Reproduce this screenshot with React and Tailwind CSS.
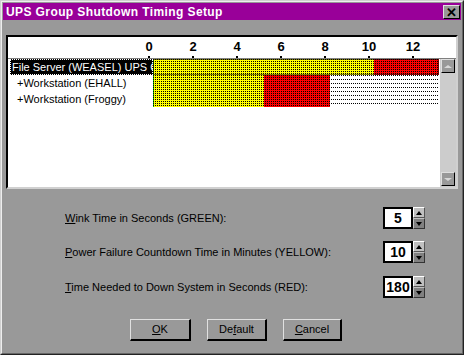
import React from 'react'

const font = { fontFamily: '"Liberation Sans", Arial, sans-serif' }

const ticks = [0, 2, 4, 6, 8, 10, 12]

const rows = [
  {
    name: "File Server (WEASEL) UPS Group",
    selected: true,
    segs: [["g", 0, 1], ["y", 1, 221], ["r", 221, 286]],
  },
  {
    name: "+Workstation (EHALL)",
    segs: [["g", 0, 1], ["y", 1, 111], ["r", 111, 177], ["w", 177, 286]],
  },
  {
    name: "+Workstation (Froggy)",
    segs: [["g", 0, 1], ["y", 1, 111], ["r", 111, 177], ["w", 177, 286]],
  },
]

const fills = { g: "#00c000", y: "#ffff00", r: "#ff0000", w: "#ffffff" }

// dithered bar, drawn like the old timing chart
const Bar = ({ id, segs, selected }) => (
  <svg width="286" height="16" className="block">
    <defs>
      {Object.keys(fills).map((k) => (
        <pattern key={k} id={id + k} width="2" height={k === "w" ? 4 : 2} patternUnits="userSpaceOnUse">
          <rect width="2" height="4" fill={fills[k]} />
          <rect width="1" height="1" fill="#000" />
        </pattern>
      ))}
    </defs>
    {segs.map(([k, a, b]) => (
      <rect key={k} x={a} y="0" width={b - a} height="16" fill={`url(#${id + k})`} />
    ))}
    {selected && (
      <rect x="0.5" y="0.5" width="285" height="15" fill="none" stroke="#000" strokeDasharray="1 1" />
    )}
  </svg>
)

const Spin = ({ value }) => (
  <div className="flex">
    <div className="w-[30px] h-[22px] bg-white border-2 border-black flex items-center justify-center text-[14px] font-bold text-black">
      {value}
    </div>
    <div className="flex flex-col w-[12px]">
      <div className="h-[11px] bg-[#c0c0c0] border-t border-l border-t-white border-l-white border-b border-r border-b-[#555] border-r-[#555] flex items-center justify-center">
        <div className="w-0 h-0 border-l-[3px] border-r-[3px] border-b-[4px] border-l-transparent border-r-transparent border-b-black" />
      </div>
      <div className="h-[11px] bg-[#808080] border-t border-l border-t-[#c0c0c0] border-l-[#c0c0c0] border-b border-r border-b-[#333] border-r-[#333] flex items-center justify-center">
        <div className="w-0 h-0 border-l-[3px] border-r-[3px] border-t-[4px] border-l-transparent border-r-transparent border-t-black" />
      </div>
    </div>
  </div>
)

const Btn = ({ w, children }) => (
  <button className={`${w} h-[22px] bg-[#999999] border-t border-l border-t-[#e0e0e0] border-l-[#e0e0e0] border-b-2 border-r-2 border-b-black border-r-black text-[11px] text-black flex items-center justify-center`}>
    {children}
  </button>
)

const ScrollBtn = ({ up }) => (
  <div className="w-[14px] h-[14px] bg-[#999999] border-t border-l border-t-[#e0e0e0] border-l-[#e0e0e0] border-b border-r border-b-black border-r-black flex items-center justify-center">
    {up ? (
      <div className="w-0 h-0 border-l-[4px] border-r-[4px] border-b-[3px] border-l-transparent border-r-transparent border-b-[#d8d8d8]" />
    ) : (
      <div className="w-0 h-0 border-l-[4px] border-r-[4px] border-t-[3px] border-l-transparent border-r-transparent border-t-[#d8d8d8]" />
    )}
  </div>
)

export default function App() {
  return (
    <div style={font} className="w-[464px] h-[355px] bg-[#999999] border border-t-[#d0d0d0] border-l-[#d0d0d0] border-r-[#222] border-b-[#222]">
      <div className="h-full border border-t-[#eeeeee] border-l-[#eeeeee] border-r-[#666] border-b-[#666] p-[1px]">
        {/* title bar */}
        <div className="relative h-[17px] bg-[#990099] flex items-center pl-[3px]">
          <span className="text-white font-bold text-[12px] tracking-[0.4px]">UPS Group Shutdown Timing Setup</span>
          <div className="absolute right-[1px] top-[2px] w-[17px] h-[14px] bg-[#999999] border-t border-l border-t-[#e0e0e0] border-l-[#e0e0e0] border-b border-r border-b-black border-r-black flex items-center justify-center text-[13px] font-bold leading-none text-black">
            ✕
          </div>
        </div>

        {/* timing list */}
        <div className="ml-[3px] mt-[15px] w-[452px] h-[154px] border-2 border-t-black border-l-black border-b-[#d0d0d0] border-r-[#d0d0d0] bg-white">
          <div className="relative h-[22px] border-b border-b-[#808080]">
            {ticks.map((t, i) => (
              <div key={t} className="absolute top-0 flex flex-col items-center w-[20px]" style={{ left: 141 + i * 44 - 10 }}>
                <span className="text-[13px] font-bold leading-[16px] text-black mt-[2px]">{t}</span>
                <div className="w-[2px] h-[2px] bg-black mt-[1px]" />
              </div>
            ))}
          </div>
          <div className="flex h-[128px]">
            <div className="w-[432px]">
              {rows.map((r, i) => (
                <div key={i} className="flex h-[16px]">
                  <div className="w-[145px] overflow-hidden whitespace-nowrap text-[11px] leading-[16px]">
                    {r.selected ? (
                      <div className="ml-[2px] bg-black text-white pl-[1px] h-[16px] border border-dotted border-white leading-[14px]">
                        {r.name}
                      </div>
                    ) : (
                      <div className="pl-[9px] text-black">{r.name}</div>
                    )}
                  </div>
                  <Bar id={"b" + i} segs={r.segs} selected={r.selected} />
                </div>
              ))}
            </div>
            <div className="w-[16px] bg-[#cccccc] flex flex-col justify-between pl-[1px] pb-[1px]">
              <ScrollBtn up />
              <ScrollBtn />
            </div>
          </div>
        </div>

        {/* settings */}
        <div className="mt-[18px] ml-[62px] flex flex-col gap-[12px] text-[11px] text-black">
          <div className="flex items-center h-[22px]">
            <span className="w-[318px]"><u>W</u>ink Time in Seconds (GREEN):</span>
            <Spin value="5" />
          </div>
          <div className="flex items-center h-[22px]">
            <span className="w-[318px]"><u>P</u>ower Failure Countdown Time in Minutes (YELLOW):</span>
            <Spin value="10" />
          </div>
          <div className="flex items-center h-[22px] mt-[1px]">
            <span className="w-[318px]"><u>T</u>ime Needed to Down System in Seconds (RED):</span>
            <Spin value="180" />
          </div>
        </div>

        {/* buttons */}
        <div className="mt-[21px] ml-[127px] flex gap-[16px]">
          <Btn w="w-[61px]"><u>O</u>K</Btn>
          <Btn w="w-[60px]">De<u>f</u>ault</Btn>
          <Btn w="w-[59px]"><u>C</u>ancel</Btn>
        </div>
      </div>
    </div>
  )
}
